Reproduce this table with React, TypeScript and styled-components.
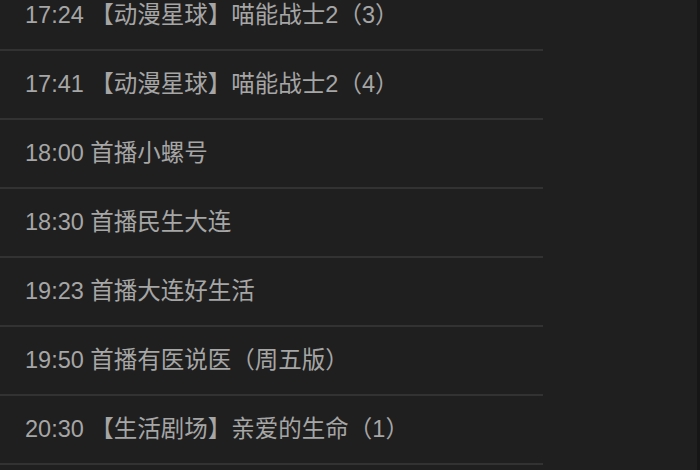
import React from "react";
import styled, { createGlobalStyle } from "styled-components";

const GlobalStyle = createGlobalStyle`
  html, body {
    margin: 0;
    padding: 0;
    background: #1f1f1f;
    overflow: hidden;
  }
`;

const Page = styled.div`
  width: 700px;
  height: 470px;
  box-sizing: border-box;
  background: #1f1f1f;
  border-right: 3px solid #161616;
  overflow: hidden;
`;

const List = styled.ul`
  list-style: none;
  margin: -18px 0 0 0;
  padding: 0;
  width: 543px;
`;

const Row = styled.li`
  height: 69px;
  box-sizing: border-box;
  display: flex;
  align-items: center;
  padding: 0 0 5px 25px;
  border-bottom: 2px solid #323232;
  font-family: "Liberation Sans", "Noto Sans CJK SC", sans-serif;
  font-size: 23.5px;
  color: #a6a6a6;
  white-space: nowrap;
`;

const items = [
  "17:24 【动漫星球】喵能战士2（3）",
  "17:41 【动漫星球】喵能战士2（4）",
  "18:00 首播小螺号",
  "18:30 首播民生大连",
  "19:23 首播大连好生活",
  "19:50 首播有医说医（周五版）",
  "20:30 【生活剧场】亲爱的生命（1）",
];

export default function App() {
  return (
    <Page>
      <GlobalStyle />
      <List>
        {items.map((t) => (
          <Row key={t}>{t}</Row>
        ))}
      </List>
    </Page>
  );
}
